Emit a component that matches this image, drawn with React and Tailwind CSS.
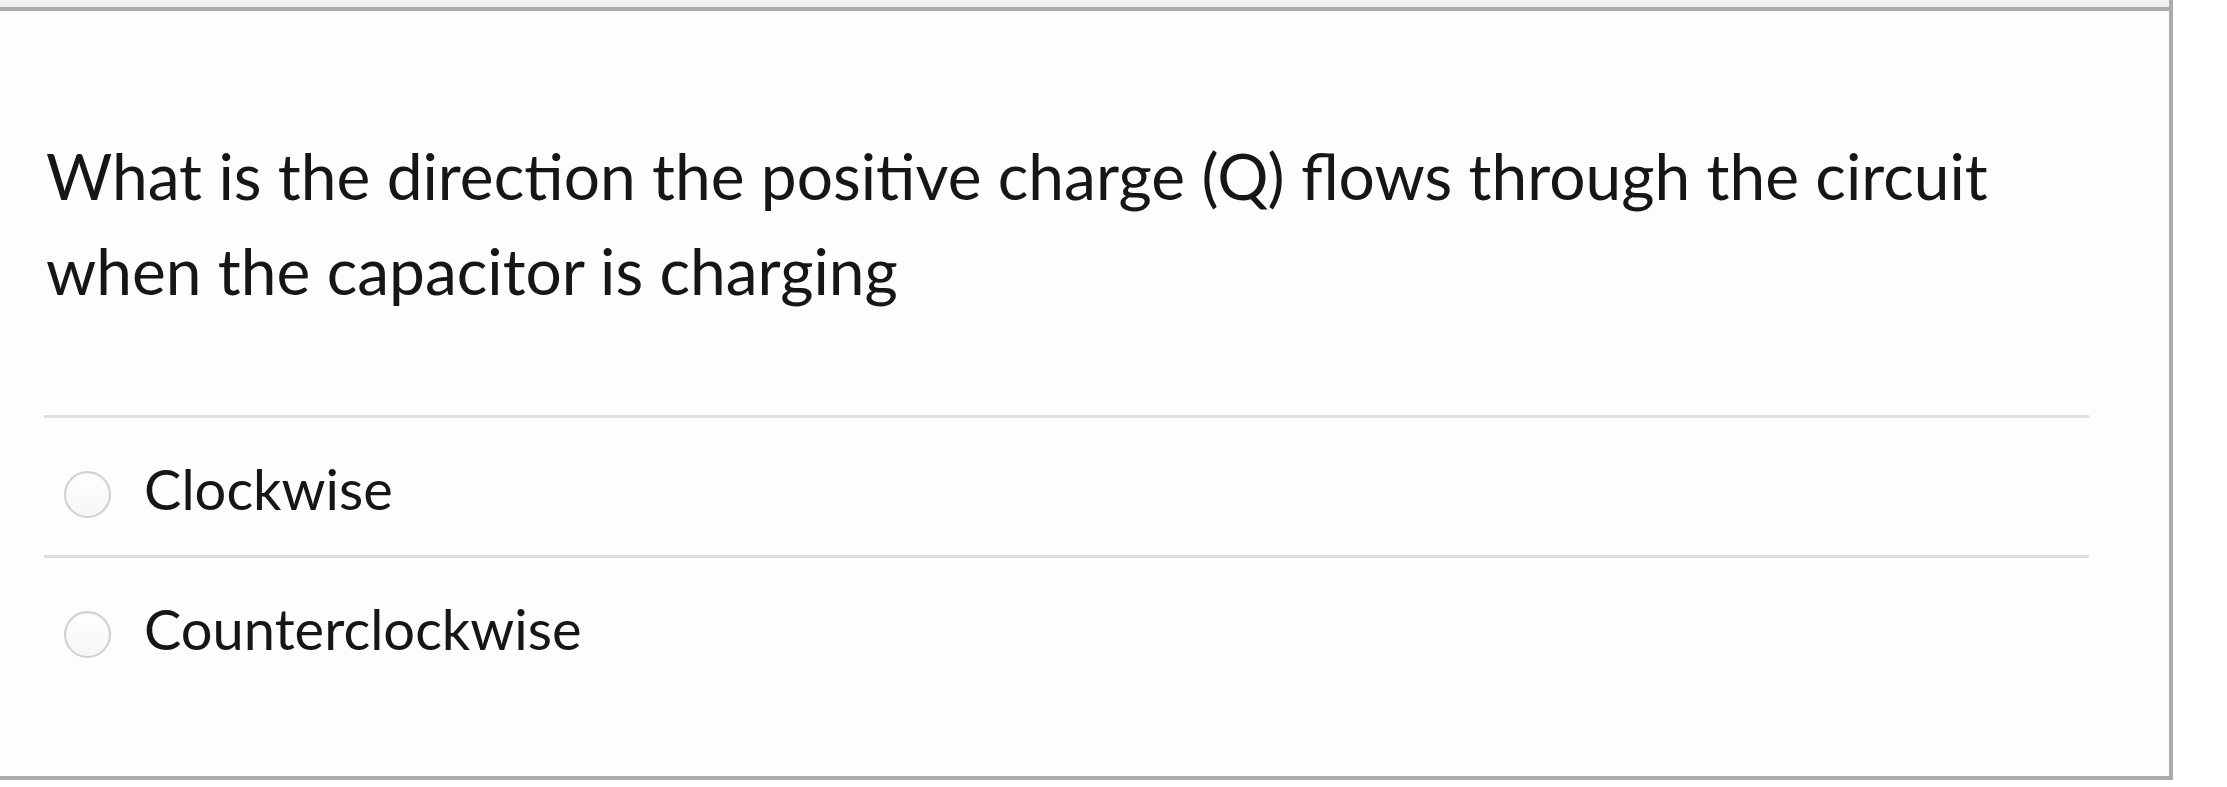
import React from "react";

const options = ["Clockwise", "Counterclockwise"];

const Radio = () => (
    <span className="mt-[53px] ml-[20px] block h-[47px] w-[47px] shrink-0 rounded-full border-2 border-[#d0d0d0] bg-gradient-to-b from-[#ffffff] to-[#f6f6f6] shadow-[inset_0_1px_2px_rgba(0,0,0,0.06)]" />
);

const App = () => {
    return (
        <div className="min-h-screen bg-white" style={{ fontFamily: "Lato, 'Open Sans', sans-serif" }}>
            <div className="w-[2173px] border-r-[4px] border-[#ababab]">
                {/* strip above the card */}
                <div className="h-[7px] bg-[#f2f2f2]" />

                <div className="h-[773px] border-t-[4px] border-b-[4px] border-[#ababab] bg-[#fdfdfd]">
                    <div className="pt-[117px] pl-[46px] pr-[80px] text-[64px] leading-[95px] text-[#161616]">
                        What is the direction the positive charge (Q) flows through the circuit when the capacitor is charging
                    </div>

                    <div className="mt-[97px] ml-[44px] mr-[80px]">
                        {options.map((opt) => (
                            <div key={opt} className="flex h-[140px] items-start border-t-[3px] border-[#dedede]">
                                <Radio />
                                <span className="mt-[38px] ml-[33px] text-[56px] leading-[65px] text-[#161616]">
                                    {opt}
                                </span>
                            </div>
                        ))}
                    </div>
                </div>
            </div>
        </div>
    );
};

export default App;
